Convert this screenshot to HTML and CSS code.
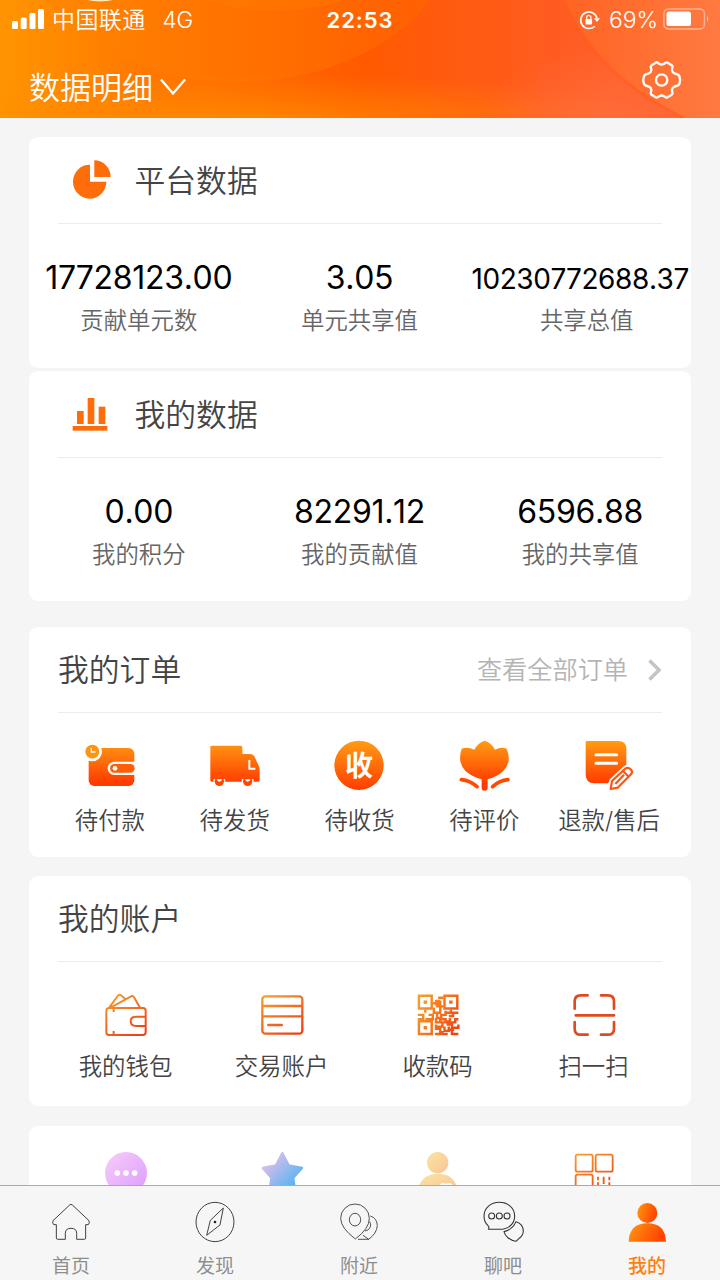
FILE: index.html
```html
<!DOCTYPE html>
<html lang="zh-CN">
<head>
<meta charset="utf-8">
<title>我的</title>
<link rel="stylesheet" href="styles.css">
</head>
<body>
<svg class="defs" aria-hidden="true">
  <defs>
    <linearGradient id="warm" x1="0" y1="0" x2="0" y2="1"><stop offset="0" stop-color="#ff9c14"/><stop offset="1" stop-color="#ff3d00"/></linearGradient>
    <linearGradient id="page" gradientUnits="userSpaceOnUse" x1="0" y1="0" x2="0" y2="130"><stop offset="0" stop-color="#ff9f14"/><stop offset="1" stop-color="#ff3a00"/></linearGradient>
    <linearGradient id="line" gradientUnits="userSpaceOnUse" x1="10" y1="0" x2="90" y2="126"><stop offset="0" stop-color="#f7a030"/><stop offset="1" stop-color="#ee4214"/></linearGradient>
    <linearGradient id="qr" gradientUnits="userSpaceOnUse" x1="0" y1="3" x2="19" y2="14"><stop offset="0" stop-color="#f3a02c"/><stop offset=".5" stop-color="#f7761c"/><stop offset="1" stop-color="#f04412"/></linearGradient>
    <linearGradient id="pink" x1="0" y1="0" x2="1" y2="1"><stop offset="0" stop-color="#f8cdf8"/><stop offset="1" stop-color="#dc9bff"/></linearGradient>
    <linearGradient id="sky" x1=".1" y1=".1" x2=".8" y2=".8"><stop offset="0" stop-color="#e6bfe8"/><stop offset="1" stop-color="#5cb4f2"/></linearGradient>
    <linearGradient id="sand" x1="0" y1="0" x2="1" y2="1"><stop offset="0" stop-color="#fbe4a0"/><stop offset="1" stop-color="#f6c59a"/></linearGradient>
    <linearGradient id="me" x1="0" y1="0" x2="1" y2=".3"><stop offset="0" stop-color="#ff9b12"/><stop offset="1" stop-color="#ff4400"/></linearGradient>
  </defs>
</svg>

<header class="header">
  <svg class="header-bg" viewBox="0 0 720 118" aria-hidden="true">
    <defs>
      <linearGradient id="h1" x1="0" x2="1" y1="0" y2="0"><stop offset="0" stop-color="#ff9500"/><stop offset=".2" stop-color="#ff7800"/><stop offset=".5" stop-color="#ff5a00"/><stop offset=".78" stop-color="#ff5c22"/><stop offset="1" stop-color="#ff6434"/></linearGradient>
      <linearGradient id="h2" x1="0" x2="1" y1="0" y2="0"><stop offset="0" stop-color="#ff8600"/><stop offset="1" stop-color="#ff6200"/></linearGradient>
      <linearGradient id="h3" x1="0" x2="1" y1="0" y2="0"><stop offset="0" stop-color="#ff6422"/><stop offset="1" stop-color="#ff7a42"/></linearGradient>
      <radialGradient id="h4" gradientUnits="userSpaceOnUse" cx="0" cy="0" r="1" gradientTransform="translate(240 128) scale(430 56)"><stop offset="0" stop-color="#ff9200" stop-opacity=".85"/><stop offset="1" stop-color="#ff8a00" stop-opacity="0"/></radialGradient>
      <radialGradient id="h5" gradientUnits="userSpaceOnUse" cx="0" cy="0" r="1" gradientTransform="translate(610 124) scale(130 80)"><stop offset="0" stop-color="#ff7040" stop-opacity=".8"/><stop offset="1" stop-color="#ff7040" stop-opacity="0"/></radialGradient>
    </defs>
    <rect width="720" height="118" fill="url(#h1)"/>
    <path d="M45 0C90 56 165 82 238 82C320 82 395 48 430 0Z" fill="url(#h2)" opacity=".75"/>
    <path d="M205 0Q275 22 345 0Z" fill="#ff8200" opacity=".3"/>
    <rect width="720" height="118" fill="url(#h4)"/>
    <rect width="720" height="118" fill="url(#h5)"/>
    <path d="M564 0C584 48 622 88 684 118H720V0Z" fill="url(#h3)"/>
    <path d="M564 0C584 48 622 88 684 118" fill="none" stroke="#ff5a1c" stroke-width="3" opacity=".5"/>
    <ellipse cx="100" cy="-4" rx="19" ry="5.500" fill="#ffe6b4"/>
  </svg>
  <div class="status">
    <div class="status-left">
      <svg class="signal" viewBox="0 0 32 20"><g fill="#fff"><rect y="12" width="6" height="8" rx="1.500"/><rect x="8.700" y="8.500" width="6" height="11.500" rx="1.500"/><rect x="17.500" y="4" width="6" height="16" rx="1.500"/><rect x="26" y="0" width="6" height="20" rx="1.500"/></g></svg>
      <span class="carrier">中国联通</span><span class="net">4G</span>
    </div>
    <div class="clock">22:53</div>
    <div class="status-right">
      <svg class="lock" viewBox="0 0 22 20" fill="none" stroke="#fff" stroke-width="1.600"><path d="M18 8A8.300 8.300 0 1 0 15.800 16.200"/><path d="M15 8.300h6L18 12z" fill="#fff" stroke="none"/><rect x="6.500" y="9" width="6.600" height="5.500" rx=".8" fill="#fff" stroke="none"/><path d="M7.700 9V7.500a2.100 2.100 0 0 1 4.200 0V9" stroke-width="1.200"/></svg>
      <span class="percent">69%</span>
      <svg class="battery" viewBox="0 0 47 22"><rect x=".9" y=".9" width="40.500" height="20" rx="4.500" fill="none" stroke="#fff" stroke-opacity=".45" stroke-width="1.500"/><rect x="3.500" y="3.500" width="24.500" height="14.500" rx="2.500" fill="#fff"/><path d="M44 7.500q2.500 3.300 0 6.600z" fill="#fff" fill-opacity=".5"/></svg>
    </div>
  </div>
  <div class="titlebar">
    <div class="title">数据明细<svg class="chev" viewBox="0 0 26 18" fill="none" stroke="#fff" stroke-width="2.300"><path d="M1 1.500L13 15.500L25 1.500"/></svg></div>
    <svg class="gear" viewBox="0 0 120 114" fill="none" stroke="#fff" stroke-width="7" stroke-linejoin="round"><circle cx="59" cy="57" r="17"/><path d="M40 6Q44 2 48 6Q59 15 70 6Q74 2 78 6L88 12Q93 15 91 21Q86 35 103 39Q110 40 112 45Q117 57 112 69Q110 74 103 75Q86 79 91 93Q93 99 88 102L78 108Q74 112 70 108Q59 99 48 108Q44 112 40 108L30 102Q25 99 27 93Q32 79 15 75Q8 74 6 69Q1 57 6 45Q8 40 15 39Q32 35 27 21Q25 15 30 12Z"/></svg>
  </div>
</header>

<main class="content">
  <section class="card">
    <div class="card-head">
      <svg class="head-icon" viewBox="0 0 120 120" fill="#ff6c0a"><path d="M54 14V65H103A50 51 0 1 1 54 14Z"/><path d="M67 1A49 50 0 0 1 116 51H67Z"/></svg>
      <h2>平台数据</h2>
    </div>
    <div class="stats">
      <div class="stat"><b>17728123.00</b><span>贡献单元数</span></div>
      <div class="stat"><b>3.05</b><span>单元共享值</span></div>
      <div class="stat stat-long"><b>10230772688.37</b><span>共享总值</span></div>
    </div>
  </section>

  <section class="card card-mine">
    <div class="card-head">
      <svg class="head-icon" viewBox="0 0 120 120" fill="#ff6c0a"><rect x="2" y="96" width="104" height="14"/><rect x="15" y="51" width="20" height="39"/><rect x="47" y="12" width="20" height="78"/><rect x="80" y="38" width="20" height="52"/></svg>
      <h2>我的数据</h2>
    </div>
    <div class="stats">
      <div class="stat"><b>0.00</b><span>我的积分</span></div>
      <div class="stat"><b>82291.12</b><span>我的贡献值</span></div>
      <div class="stat"><b>6596.88</b><span>我的共享值</span></div>
    </div>
  </section>

  <section class="card card-orders">
    <div class="card-head card-head-plain">
      <h2>我的订单</h2>
      <div class="more"><span>查看全部订单</span><svg viewBox="0 0 14 22" fill="none" stroke="#c4c4c4" stroke-width="3.600"><path d="M1.500 1.500L11 11L1.500 20.500"/></svg></div>
    </div>
    <div class="grid orders">
      <div class="cell">
        <svg viewBox="0 0 150 150"><rect x="11" y="24" width="137" height="114" rx="17" fill="url(#page)"/><circle cx="22" cy="35" r="29" fill="#fff"/><circle cx="22" cy="35" r="21" fill="#fd9418"/><path d="M19 24V36H31" fill="none" stroke="#fff" stroke-width="4"/><path d="M150 65H88a20 20 0 0 0 0 40H150Z" fill="#fff"/><rect x="75" y="72" width="74" height="26" rx="13" fill="#ff5d06"/><circle cx="90" cy="85" r="7" fill="#fff"/></svg>
        <span>待付款</span>
      </div>
      <div class="cell">
        <svg viewBox="0 0 150 150"><path d="M5 17H92q5 0 5 5V42H120q9 0 13 7l14 30q2 5 2 12v29q0 5-5 5H5q-4 0-4-4V21q0-4 4-4Z" fill="url(#page)"/><path d="M118 60V86H136" fill="none" stroke="#fff" stroke-width="6"/><g><circle cx="28" cy="122" r="18" fill="#fff"/><circle cx="113" cy="122" r="18" fill="#fff"/><path d="M8 103H133V117H8Z" fill="#ff4b03"/><circle cx="28" cy="124" r="14" fill="#ff4502"/><circle cx="113" cy="124" r="14" fill="#ff4502"/><path d="M20 118H37Q34 125 28 125T20 118ZM105 118H122Q119 125 113 125T105 118Z" fill="#fff"/></g></svg>
        <span>待发货</span>
      </div>
      <div class="cell">
        <svg viewBox="0 0 150 150"><circle cx="75" cy="76" r="74" fill="url(#warm)"/><text x="75" y="107" class="glyph">收</text></svg>
        <span>待收货</span>
      </div>
      <div class="cell">
        <svg viewBox="0 0 150 150" fill="url(#page)"><path d="M77 2Q97 8 108 29Q126 20 143 26Q160 66 132 94Q112 112 86 118V143Q86 152 77 152T68 143V118Q42 112 20 94Q-6 66 8 26Q26 20 46 29Q57 8 77 2Z"/><path d="M7 119Q34 122 54 140M147 119Q120 122 101 140" fill="none" stroke="#ff4a04" stroke-width="11" stroke-linecap="round"/></svg>
        <span>待评价</span>
      </div>
      <div class="cell">
        <svg viewBox="0 0 150 150"><path d="M9 3H103Q127 3 127 27V75L71 130H31Q5 130 5 103V7Q5 3 9 3Z" fill="url(#page)"/><path d="M36 44H98M36 70H98" stroke="#fff" stroke-width="9" stroke-linecap="round"/><path d="M80 147L84 123L124 86Q132 80 140 88Q148 96 141 103L101 143Z" fill="#fff" stroke="#fff" stroke-width="17" stroke-linejoin="round"/><path d="M80 147L84 123L124 86Q132 80 140 88Q148 96 141 103L101 143ZM117 93L134 110M94 132L120 104" fill="none" stroke="#ff5512" stroke-width="6.500" stroke-linejoin="round"/></svg>
        <span>退款/售后</span>
      </div>
    </div>
  </section>

  <section class="card card-account">
    <div class="card-head card-head-plain"><h2>我的账户</h2></div>
    <div class="grid account">
      <div class="cell">
        <svg viewBox="0 0 126 126" fill="none" stroke="url(#line)" stroke-width="6" stroke-linejoin="round"><rect x="4" y="42" width="118" height="81" rx="8"/><path d="M13 40L38 6Q42 0 48 4L61 15M18 40L78 7Q84 4 88 11L105 41M26 43V54M26 111V121M122 68H93Q77 68 77 82T93 96H122"/></svg>
        <span>我的钱包</span>
      </div>
      <div class="cell">
        <svg viewBox="-2 0 126 126" fill="none" stroke="url(#line)" stroke-width="7"><rect x="2" y="7" width="120" height="112" rx="9"/><path d="M2 36H122M2 67H122"/><path d="M20 93H60" stroke-width="8" stroke-linecap="round"/></svg>
        <span>交易账户</span>
      </div>
      <div class="cell">
        <svg viewBox="-.4 -.3 19.700 19.700" fill="none" stroke="url(#qr)" stroke-width="1.150"><path d="M.5 .5H6.500V6.500H.5ZM12.500 .5H18.500V6.500H12.500ZM.5 12.500H6.500V18.500H.5Z"/><path d="M2.700 3.500H4.300M14.700 3.500H16.300M2.700 15.500H4.300" stroke-width="1.600"/><path d="M9.500 1.500H12M8 3H10V4.500H8M7 4H9V5.500H12M10.500 3V8.500H8M3.500 7V8.500M7.500 6V8.500H9V11H11V9.500H13V7.500M15.500 7V8.500H13M19 8.500H16.500V10H14.500M0 9.500H2.500V11.500H0M5 9.500H7V11.500H3.500M8.500 11V13H10.500V11.500H13V13H11.500V15H9M15 11V13H17.500V11.500H19M14 12V14H16V15.500H19V14M8.500 14V16H10.500V18.500H8M12.500 15V17H14.500V15M11.500 17V18.500H14M16 16.500V18.500H19M17 16.500H15"/></svg>
        <span>收款码</span>
      </div>
      <div class="cell">
        <svg viewBox="-1 0 126 126" fill="none" stroke="#df4b20" stroke-width="8" stroke-linecap="round"><path d="M4 44V22Q4 4 22 4H43M83 4H104Q122 4 122 22V44M4 84V104Q4 122 22 122H43M83 122H104Q122 122 122 104V84M7 64H122"/></svg>
        <span>扫一扫</span>
      </div>
    </div>
  </section>

  <section class="card card-extra">
    <div class="grid extra">
      <div class="cell"><svg viewBox="0 0 126 126"><circle cx="63" cy="63" r="63" fill="url(#pink)"/><g fill="#fff"><circle cx="37" cy="63" r="8.500"/><circle cx="63" cy="63" r="8.500"/><circle cx="89" cy="63" r="8.500"/></g></svg></div>
      <div class="cell"><svg viewBox="-1 0 126 126"><path d="M63 3L82 40L122 48L96 77L101 119L63 101L25 119L30 77L4 48L44 40Z" fill="url(#sky)" stroke="url(#sky)" stroke-width="7" stroke-linejoin="round"/></svg></div>
      <div class="cell"><svg viewBox="2 0 126 126"><g fill="url(#sand)"><circle cx="64" cy="32" r="32"/><path d="M2 126Q8 66 64 65T126 126Z"/></g><path d="M88 121L72 106Q68 95 79 93Q85 92 89 97Q93 92 100 93Q111 96 105 106Z" fill="#fff"/></svg></div>
      <div class="cell"><svg viewBox="0 0 126 126" fill="none" stroke="url(#line)" stroke-width="5.500"><rect x="8" y="8" width="51" height="51" rx="5"/><rect x="68" y="8" width="51" height="51" rx="5"/><rect x="8" y="68" width="51" height="51" rx="5"/><path d="M75 74V85M75 91V120M92 74V96M109 74V85M109 91V120M92 104V120"/></svg></div>
    </div>
  </section>
</main>

<nav class="tabs">
  <div class="tab">
    <svg viewBox="0 0 120 130" fill="none" stroke="#333" stroke-width="2.800" stroke-linejoin="round"><path d="M56 15Q60 11 64 15L114 62Q117 69 112 74H104V114Q104 118 100 118H77V100Q77 85 60 85T43 100V118H20Q16 118 16 114V74H8Q3 69 6 62Z"/></svg>
    <span>首页</span>
  </div>
  <div class="tab">
    <svg viewBox="0 0 120 130" fill="none" stroke="#333" stroke-width="2.800" stroke-linejoin="round"><ellipse cx="60" cy="66" rx="57" ry="59"/><path d="M85 24L75 75L35 106L46 61Z"/><circle cx="60" cy="66" r="4" fill="#222" stroke="none"/></svg>
    <span>发现</span>
  </div>
  <div class="tab">
    <svg viewBox="0 0 120 130" fill="none" stroke="#444" stroke-width="2.800"><path d="M49 117Q5 84 5 55A43 43 0 0 1 91 55Q91 86 49 117Z"/><ellipse cx="48" cy="59" rx="17" ry="19"/><path d="M94 48Q114 54 115 77Q113 101 89 118L72 106M92 65Q100 78 87 90L78 93M57 118H90"/></svg>
    <span>附近</span>
  </div>
  <div class="tab">
    <svg viewBox="0 0 120 130" fill="none" stroke="#333" stroke-width="3.200" stroke-linejoin="round"><path d="M16 88Q20 82 15 77Q3 66 3 48C3 23 24 7 49 7S95 23 95 48S76 88 49 88Z"/><circle cx="26" cy="48" r="9"/><circle cx="49" cy="48" r="9"/><circle cx="72" cy="48" r="9"/><path d="M99 65C113 69 121 81 121 94Q120 107 110 114L99 124C82 121 66 110 63 95Q89 89 99 65Z"/></svg>
    <span>聊吧</span>
  </div>
  <div class="tab tab-on">
    <svg viewBox="0 0 120 130" fill="url(#me)"><circle cx="61" cy="39" r="30"/><path d="M5 125Q7 70 61 70T117 125Z"/></svg>
    <span>我的</span>
  </div>
</nav>
</body>
</html>
```

FILE: styles.css
```css
* { box-sizing: border-box; }

body {
  display: flex;
  flex-direction: column;
  width: 720px;
  height: 1280px;
  margin: 0;
  overflow: hidden;
  background: #f5f5f5;
  color: #444;
  font-family: Inter, "Noto Sans CJK SC", sans-serif;
  font-weight: 350;
}

svg { display: block; flex: none; overflow: visible; }
.defs { position: absolute; width: 0; height: 0; }

/* Header */
.header {
  position: relative;
  flex: none;
  height: 118px;
  overflow: hidden;
  color: #fff;
}
.header-bg { position: absolute; inset: 0; width: 720px; height: 118px; }
.status {
  position: relative;
  display: grid;
  grid-template-columns: 1fr auto 1fr;
  align-items: center;
  height: 40px;
  padding: 0 12px;
  font-size: 23px;
  line-height: 40px;
}
.status-left, .status-right { display: flex; align-items: center; }
.status-right { justify-content: flex-end; margin-right: -2px; }
.signal { width: 32px; height: 20px; margin: -2px 8px 0 0; }
.carrier { letter-spacing: .4px; }
.net { margin-left: 17px; font-size: 22.500px; letter-spacing: -.2px; }
.clock { font-weight: 600; font-size: 22px; letter-spacing: .9px; }
.lock { width: 22px; height: 20px; margin-right: 8px; }
.percent { font-size: 23px; letter-spacing: -.1px; }
.battery { width: 47px; height: 22px; margin: -2px 0 0 5px; }
.titlebar {
  position: relative;
  display: flex;
  justify-content: space-between;
  height: 78px;
  padding: 0 38px 0 29px;
}
.title {
  display: flex;
  align-items: center;
  height: 90px;
  font-size: 31px;
}
.chev { width: 26px; height: 18px; margin: 4px 0 0 7px; }
.gear { width: 40px; height: 38px; margin-top: 21px; }

/* Cards */
.content {
  flex: 1;
  min-height: 0;
  padding: 19px 29px 0;
  overflow: hidden;
}
.card {
  height: 231px;
  padding: 0 29px;
  border-radius: 9px;
  background: #fff;
}
.card-mine { height: 230px; margin-top: 3px; }
.card-orders { height: 230px; margin-top: 26px; }
.card-account { height: 230px; margin-top: 19px; }
.card-extra { margin-top: 20px; }
.card-head {
  display: flex;
  align-items: center;
  height: 87px;
  border-bottom: 1px solid #ececec;
}
.card-head-plain { height: 86px; justify-content: space-between; }
.card-head h2 {
  margin: 1px 0 0;
  font-size: 30.800px;
  font-weight: 350;
  line-height: 44px;
}
.card-head-plain h2 { margin-top: 0; }
.head-icon { width: 40px; height: 40px; margin: 0 22.500px 0 14px; }
.more {
  display: flex;
  align-items: center;
  color: #b4b4b4;
  font-size: 25.200px;
  line-height: 36px;
}
.more svg { width: 14px; height: 22px; margin-left: 20px; }

/* Figures */
.stats {
  display: grid;
  grid-template-columns: repeat(3, 1fr);
  margin: 0 -28.500px 0 -29.500px;
  padding-top: 33px;
}
.stat {
  display: flex;
  flex-direction: column;
  align-items: center;
  min-width: 0;
  white-space: nowrap;
}
.stat b {
  height: 42px;
  color: #000;
  font-size: 32px;
  font-weight: 400;
  font-kerning: none;
  line-height: 42px;
  letter-spacing: -.3px;
}
.stat span {
  color: #666;
  font-size: 23.400px;
  line-height: 34px;
  margin-top: 5px;
}
.stat-long b { font-size: 28px; line-height: 44px; letter-spacing: -.4px; }
.stat-long span { margin-left: 13px; }

/* Icon grids */
.grid { display: grid; margin: 0 -9.500px 0 -10.500px; }
.orders { grid-template-columns: repeat(5, 1fr); padding-top: 27px; }
.account, .extra { grid-template-columns: repeat(4, 1fr); }
.account { padding-top: 32px; }
.extra { padding-top: 26px; }
.cell {
  display: flex;
  flex-direction: column;
  align-items: center;
  white-space: nowrap;
  font-size: 23.400px;
  line-height: 34px;
}
.orders svg { width: 50px; height: 50px; }
.orders span { margin-top: 14px; }
.account svg, .extra svg { width: 42px; height: 42px; }
.account span { margin-top: 14px; }
.glyph {
  fill: #fff;
  font-family: "Noto Sans CJK SC", sans-serif;
  font-size: 84px;
  font-weight: 700;
  text-anchor: middle;
}

/* Bottom tabs */
.tabs {
  display: flex;
  flex: none;
  height: 95px;
  border-top: 1px solid #aaa;
  background: #f6f6f6;
}
.tab {
  display: flex;
  flex: 1;
  flex-direction: column;
  align-items: center;
  padding-top: 14px;
  padding-right: 2px;
  color: #8e8e8e;
  font-size: 19px;
  font-weight: 400;
  line-height: 28px;
}
.tab svg { width: 40px; height: 43.300px; }
.tab span { margin-top: 10px; }
.tab-on { color: #ff7f0e; font-weight: 500; }
```
